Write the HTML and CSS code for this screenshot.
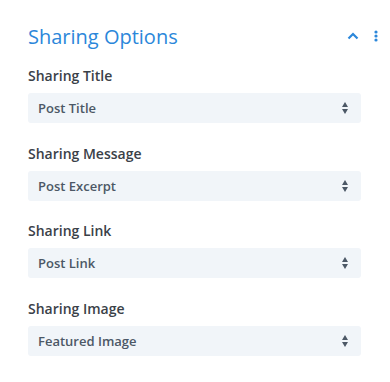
FILE: index.html
```html
<!DOCTYPE html>
<html lang="en">
<head>
    <meta charset="UTF-8">
    <title>Sharing Options</title>
    <link rel="stylesheet" href="styles.css">
</head>
<body>

<div class="panel">
    <div class="panel-head">
        <h2>Sharing Options</h2>
        <div class="head-icons">
            <svg class="chevron" width="12" height="8" viewBox="0 0 12 8">
                <path d="M1.5 6.5 L6 2 L10.5 6.5" fill="none" stroke="#2b87da" stroke-width="2.2"/>
            </svg>
            <svg class="dots" width="4" height="12" viewBox="0 0 4 12">
                <circle cx="2" cy="2" r="1.6" fill="#2b87da"/>
                <circle cx="2" cy="6" r="1.6" fill="#2b87da"/>
                <circle cx="2" cy="10" r="1.6" fill="#2b87da"/>
            </svg>
        </div>
    </div>

    <div class="field">
        <label>Sharing Title</label>
        <div class="select">Post Title<span class="arrows"></span></div>
    </div>

    <div class="field">
        <label>Sharing Message</label>
        <div class="select">Post Excerpt<span class="arrows"></span></div>
    </div>

    <div class="field">
        <label>Sharing Link</label>
        <div class="select">Post Link<span class="arrows"></span></div>
    </div>

    <div class="field">
        <label>Sharing Image</label>
        <div class="select">Featured Image<span class="arrows"></span></div>
    </div>
</div>

</body>
</html>
```

FILE: styles.css
```css
body {
    margin: 0;
    background-color: #fff;
    font-family: 'Open Sans', sans-serif;
}

.panel {
    padding: 22px 12px 0 28px;
}

.panel-head {
    display: flex;
    align-items: center;
    justify-content: space-between;
    height: 28px;
    margin-bottom: 16px;
}

.panel-head h2 {
    margin: 0;
    font-size: 20px;
    font-weight: 400;
    color: #2b87da;
}

.head-icons {
    display: flex;
    align-items: center;
    gap: 15px;
}

.field {
    margin-bottom: 20.5px;
    padding-right: 17px;
}

.field label {
    display: block;
    font-size: 14px;
    font-weight: 600;
    color: #3a4148;
    line-height: 20px;
    margin-bottom: 7px;
}

.select {
    position: relative;
    height: 30px;
    line-height: 30px;
    padding: 0 10px;
    background-color: #f1f5f9;
    border-radius: 3px;
    font-size: 13px;
    font-weight: 600;
    color: #4c5866;
}

/* strzałki góra/dół */
.arrows {
    position: absolute;
    right: 12px;
    top: 9px;
    width: 7px;
    height: 12px;
}

.arrows::before,
.arrows::after {
    content: "";
    position: absolute;
    left: 0;
    border-left: 3.5px solid transparent;
    border-right: 3.5px solid transparent;
}

.arrows::before {
    top: 0;
    border-bottom: 5px solid #4c5866;
}

.arrows::after {
    bottom: 0;
    border-top: 5px solid #4c5866;
}
```
